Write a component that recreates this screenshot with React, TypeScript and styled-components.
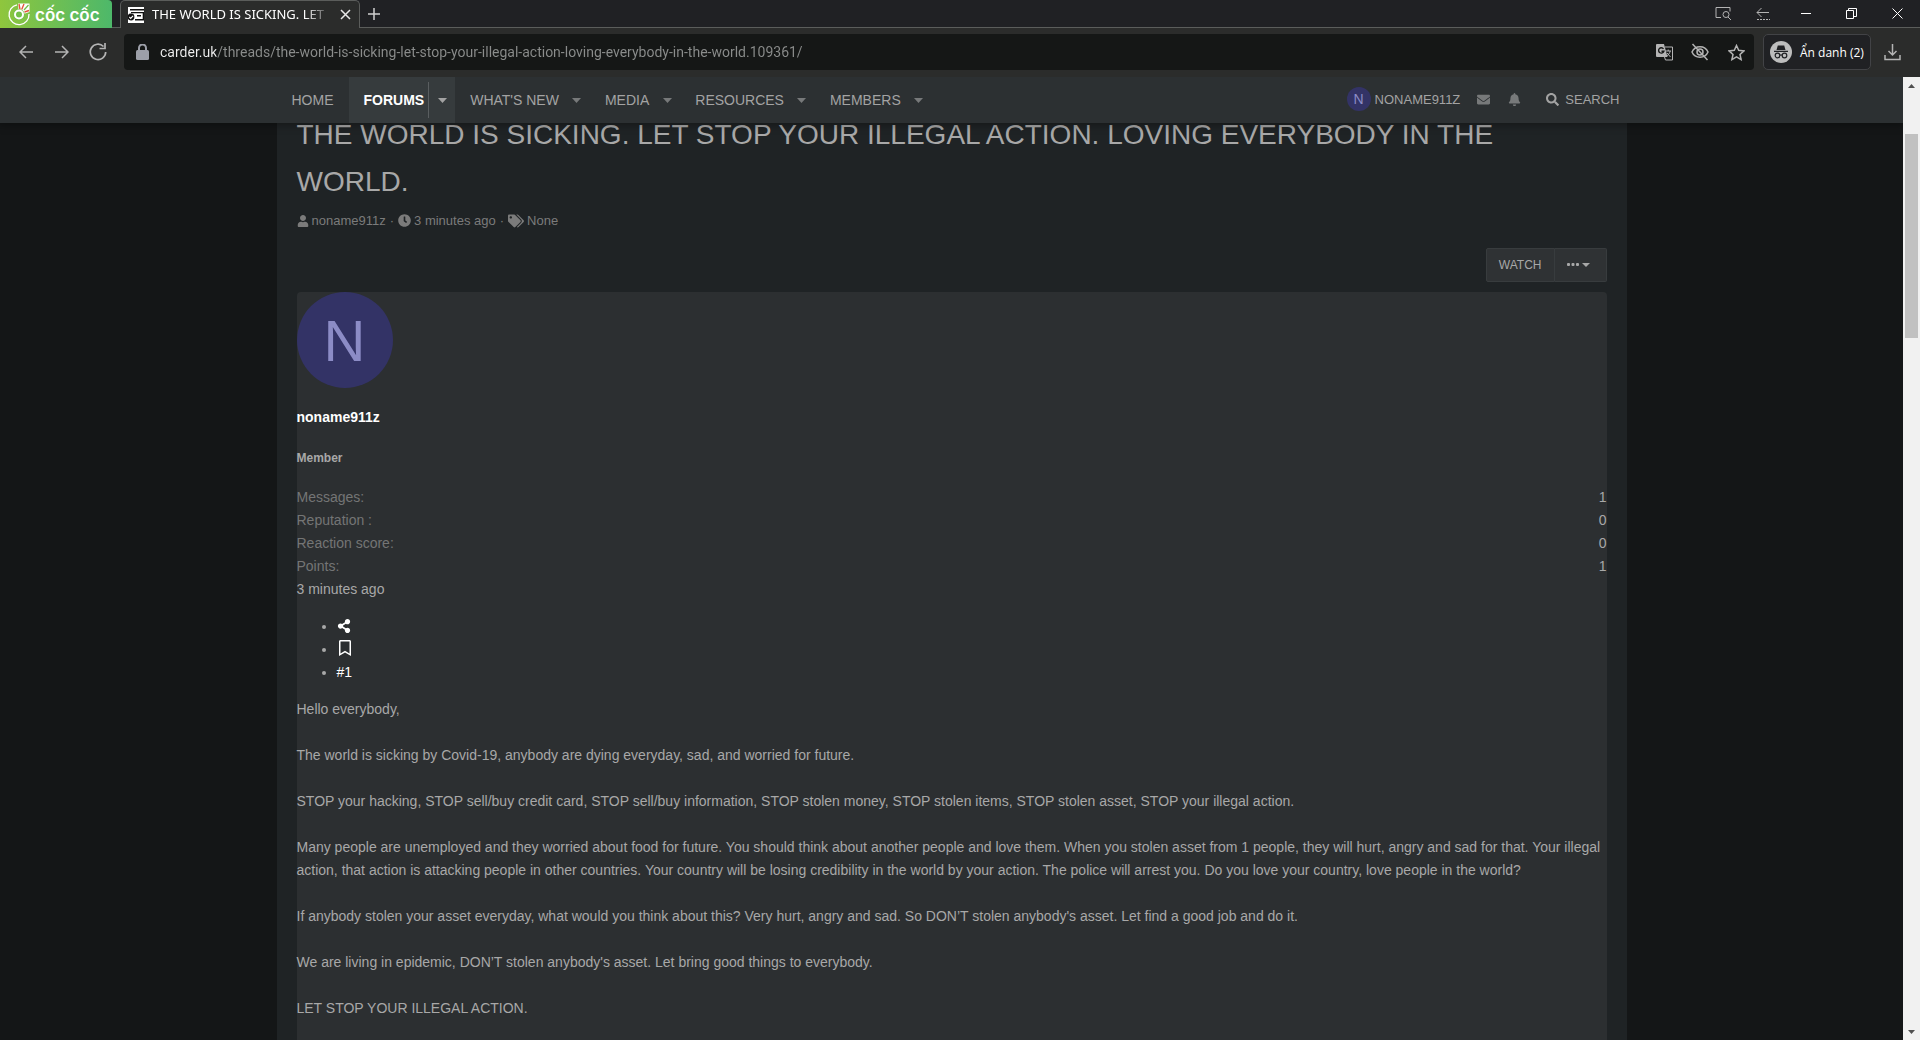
import React from 'react';
import styled, { createGlobalStyle } from 'styled-components';
import {
  FaUser, FaClock, FaTags, FaEnvelope, FaBell, FaSearch, FaShareAlt, FaRegBookmark,
} from 'react-icons/fa';

const Global = createGlobalStyle`
  * { box-sizing: border-box; }
  body { margin: 0; background: #141617; }
  button { border: 0; padding: 0; background: none; color: inherit; font: inherit; cursor: pointer; }
  a { color: inherit; text-decoration: none; }
  svg { display: block; flex: none; }
`;

const uiFont = '"Noto Sans", "Open Sans", sans-serif';
const pageFont = '"Liberation Sans", Arial, sans-serif';

const Window = styled.div`
  height: 100vh;
  display: flex;
  flex-direction: column;
  overflow: hidden;
  font-family: ${pageFont};
`;

/* ---------- Browser frame ---------- */

const TabStrip = styled.div`
  flex: none;
  height: 28px;
  display: flex;
  background: linear-gradient(#5b5d5b, #5b5d5b) bottom / 100% 1px no-repeat #202124;
  font-family: ${uiFont};
`;

const Brand = styled.button`
  width: 112px;
  height: 28px;
  display: flex;
  align-items: center;
  gap: 4px;
  padding-left: 7px;
  border-radius: 0 4px 0 0;
  background: linear-gradient(90deg, #8fc63d, #4db86a);
  color: #fff;
`;

const BrandName = styled.span`
  padding-top: 2px;
  font: 600 17px/26px "Inter", sans-serif;
  white-space: nowrap;
`;

const Tab = styled.div`
  width: 240px;
  height: 28px;
  margin-left: 8px;
  padding: 0 8px 0 7px;
  display: flex;
  align-items: center;
  border: 1px solid #5b5d5b;
  border-bottom: 0;
  border-radius: 5px 5px 0 0;
  background: #2b2c2b;
`;

const TabTitle = styled.span`
  flex: 1;
  margin: 0 8px;
  overflow: hidden;
  white-space: nowrap;
  font-size: 13px;
  line-height: 24px;
  padding-bottom: 2px;
  color: #fff;
  mask-image: linear-gradient(90deg, #000 85%, transparent);
`;

const IconButton = styled.button<{ $w: number; $color?: string }>`
  width: ${(p) => p.$w}px;
  flex: none;
  display: flex;
  align-items: center;
  justify-content: center;
  color: ${(p) => p.$color ?? '#b4b4b4'};
`;

const WindowControls = styled.div`
  margin-left: auto;
  display: flex;
  height: 27px;
`;

const Toolbar = styled.div`
  flex: none;
  height: 49px;
  padding: 6px 10px 7px 8px;
  display: flex;
  background: #2b2c2b;
  font-family: ${uiFont};
`;

const NavButtons = styled.div`
  display: flex;
  width: 116px;
`;

const AddressBar = styled.div`
  flex: 1;
  display: flex;
  align-items: center;
  padding: 0 0 0 12px;
  border-radius: 4px;
  background: #151716;
  color: #9c9fa8;
`;

const AddressInput = styled.input`
  flex: 1;
  min-width: 0;
  height: 36px;
  margin: 0 0 0 11px;
  padding: 0;
  border: 0;
  outline: 0;
  font-family: Roboto, ${uiFont};
  font-size: 14px;
  color: #8b8d8c;
  background: linear-gradient(90deg, #f0f0f0 56px, #8b8d8c 56px);
  background-clip: text;
  -webkit-text-fill-color: transparent;
`;

const AddressActions = styled.div`
  display: flex;
  height: 36px;
`;

const Profile = styled.button`
  width: 108px;
  margin: 0 4px 0 9px;
  padding: 0 6px;
  display: flex;
  align-items: center;
  gap: 8px;
  border: 1px solid #424346;
  border-radius: 5px;
  background: #202124;
  color: #fff;
  font-family: "Open Sans", sans-serif;
  font-size: 12px;
  white-space: nowrap;
`;

/* ---------- Page ---------- */

const Viewport = styled.div`
  flex: 1;
  min-height: 0;
  display: flex;
`;

const Page = styled.div`
  flex: 1;
  min-width: 0;
  overflow: hidden;
  background: #141617;
  color: #a8a8a8;
  font-size: 14px;
  line-height: 23px;
`;

const NavBar = styled.nav`
  position: relative;
  z-index: 1;
  height: 46px;
  background: #2c3032;
  box-shadow: 0 0 8px 2px rgba(0, 0, 0, 0.35);
`;

const NavInner = styled.div`
  height: 100%;
  max-width: 1350px;
  margin: 0 auto;
  display: flex;
  justify-content: space-between;
`;

const NavList = styled.ul`
  margin: 0;
  padding: 0;
  display: flex;
  list-style: none;
`;

const NavItem = styled.li<{ $active?: boolean }>`
  display: flex;
  align-items: center;
  background: ${(p) => (p.$active ? '#363b3d' : 'transparent')};
  color: ${(p) => (p.$active ? '#fff' : '#a3a3a3')};
  font-weight: ${(p) => (p.$active ? 700 : 400)};
`;

const NavLink = styled.a<{ $alone?: boolean }>`
  padding: 0 ${(p) => (p.$alone ? 15 : 4)}px 0 15px;
  line-height: 46px;
  text-transform: uppercase;
`;

const NavCaret = styled.button<{ $active?: boolean }>`
  width: 27px;
  height: 36px;
  display: flex;
  align-items: center;
  justify-content: center;
  border-left: 1px solid ${(p) => (p.$active ? '#5a5e60' : 'transparent')};
  color: ${(p) => (p.$active ? '#a3a3a3' : '#77797a')};
`;

const Account = styled.div`
  display: flex;
  align-items: center;
  padding: 0 7px 2px 0;
  font-size: 13px;
  color: #a3a3a3;
`;

const AccountLink = styled.a<{ $gap: number }>`
  display: flex;
  align-items: center;
  gap: ${(p) => p.$gap}px;
`;

const AccountIcons = styled.div`
  display: flex;
  gap: 18px;
  margin: 0 25px 0 16px;
  color: #77797a;
`;

const Avatar = styled.span<{ $size: number; $font: number }>`
  width: ${(p) => p.$size}px;
  height: ${(p) => p.$size}px;
  display: flex;
  align-items: center;
  justify-content: center;
  border-radius: 50%;
  background: #333366;
  color: #8c8cc6;
  font-size: ${(p) => p.$font}px;
  font-weight: 400;
`;

const Content = styled.main`
  max-width: 1350px;
  min-height: 100%;
  margin: 0 auto;
  padding: 0 20px;
  background: #1f2325;
`;

const Title = styled.h1`
  margin: -12px 0 0;
  font-size: 28px;
  font-weight: 400;
  line-height: 47px;
`;

const Meta = styled.div`
  display: flex;
  align-items: center;
  gap: 4px;
  margin: 5px 0 17px;
  font-size: 13px;
  line-height: 21px;
  color: #7b7b7b;
`;

const MetaItem = styled.a`
  display: flex;
  align-items: center;
  gap: 3px;
`;

const Actions = styled.div`
  display: flex;
  justify-content: flex-end;
  margin-bottom: 10px;
`;

const ActionButton = styled.button<{ $side: 'left' | 'right' }>`
  height: 34px;
  display: flex;
  align-items: center;
  gap: 3px;
  padding: ${(p) => (p.$side === 'left' ? '0 12px' : '0 16px 0 12px')};
  border: 1px solid #383c3e;
  border-left-width: ${(p) => (p.$side === 'left' ? 1 : 0)}px;
  border-radius: ${(p) => (p.$side === 'left' ? '2px 0 0 2px' : '0 2px 2px 0')};
  background: #2f3234;
  font-size: 12px;
  text-transform: uppercase;
`;

const Post = styled.article`
  min-height: 800px;
  border-radius: 4px;
  background: #2c2f31;
`;

const UserName = styled.h4`
  margin: 18px 0 19px;
  font-size: 14px;
  line-height: 23px;
  color: #fff;
`;

const UserTitle = styled.h5`
  margin: 0 0 18px;
  font-size: 12px;
  line-height: 20px;
`;

const Stats = styled.dl`
  margin: 0;
`;

const Stat = styled.div`
  display: flex;
  justify-content: space-between;
  dt { color: #747575; }
  dd { margin: 0; }
`;

const PostTools = styled.ul`
  margin: 14px 0;
  padding-left: 40px;
  a {
    display: inline-block;
    color: #fff;
  }
  svg { display: inline-block; vertical-align: -2px; }
`;

const Body = styled.div`
  p { margin: 0 0 23px; }
`;

const ScrollBar = styled.div`
  flex: none;
  width: 17px;
  display: flex;
  flex-direction: column;
  align-items: center;
  background: #f1f1f1;
  color: #505050;
`;

const ScrollArrow = styled.button`
  width: 17px;
  height: 17px;
  flex: none;
  display: flex;
  align-items: center;
  justify-content: center;
`;

const ScrollTrack = styled.div`
  flex: 1;
  width: 13px;
  padding-top: 40px;
`;

const ScrollThumb = styled.div`
  height: 23%;
  background: #c1c1c1;
`;

/* ---------- Drawings ---------- */

const Caret = ({ w = 9, h = 5, up = false }: { w?: number; h?: number; up?: boolean }) => (
  <svg width={w} height={h} viewBox="0 0 10 6" preserveAspectRatio="none" fill="currentColor" aria-hidden>
    <path d={up ? 'M0 6h10L5 0z' : 'M0 0h10L5 6z'} />
  </svg>
);

type LineProps = { w: number; h: number; sw?: number; children: React.ReactNode };
const Line = ({ w, h, sw = 1.5, children }: LineProps) => (
  <svg width={w} height={h} viewBox={`0 0 ${w} ${h}`} fill="none" stroke="currentColor" strokeWidth={sw} aria-hidden>
    {children}
  </svg>
);

const BrandMark = () => (
  <svg width="24" height="24" viewBox="0 0 24 24" fill="none" aria-hidden>
    <path d="M10 2.800A10 10 0 1 0 22 12" stroke="#fff" strokeWidth="1.300" />
    <path d="M11 1.500h11.500V10l-6 2-5-4z" fill="#fff" />
    <path d="M12 2l1 5.500M17 2l-2.300 5.500M22 8.500l-4.500 1.500" stroke="#e4543c" strokeWidth="1.400" />
    <path d="M21.500 3l-4.500 5" stroke="#6fbf48" strokeWidth="1.200" />
    <circle cx="12" cy="12.500" r="5.600" fill="#74c04a" />
    <circle cx="12" cy="12.500" r="4" stroke="#fff" strokeWidth="2" />
  </svg>
);

const SiteIcon = () => (
  <svg width="16" height="16" viewBox="0 0 16 16" aria-hidden>
    <path fill="#fff" d="M0 0h16v16H0z" />
    <path fill="#111" d="M2 2h14v1.500H2zM3 5h13v1.300H3zM14.700 5H16v8h-1.300zM7 12h9v1.500H7zM9 8h4v1.600H9z" />
    <circle cx="3" cy="10" r="3.400" fill="#111" />
    <path fill="none" stroke="#fff" strokeWidth="1.100" d="M1.300 10l1.400 1.400L5 8.800" />
  </svg>
);

const Incognito = () => (
  <svg width="22" height="22" viewBox="0 0 22 22" aria-hidden>
    <circle cx="11" cy="11" r="11" fill="#bdbdbd" />
    <path fill="#202124" d="M7.800 4.500h6.400l1.300 4.500h-9zM4 9.800h14v1.200H4z" />
    <g fill="none" stroke="#202124" strokeWidth="1.200">
      <circle cx="7.500" cy="14.500" r="2.300" />
      <circle cx="14.500" cy="14.500" r="2.300" />
      <path d="M9.800 14.300q1.200-.8 2.400 0" />
    </g>
  </svg>
);

const Translate = () => (
  <svg width="17" height="17" viewBox="0 0 17 17" aria-hidden>
    <path fill="currentColor" d="M1 0h7l3.500 13H1a1 1 0 0 1-1-1V1a1 1 0 0 1 1-1z" />
    <path fill="none" stroke="currentColor" d="M9 3h7.500v13H9.500L8.500 13M9.500 7h5.500M12.200 5.500V7M14.200 7c-.5 2.500-2 4-3.700 5.500M11 9l3.500 4" />
    <path fill="none" stroke="#151716" strokeWidth="1.400" d="M7.500 4.800A2.700 2.700 0 1 0 7.900 7.200H5.500" />
  </svg>
);

/* ---------- Data ---------- */

const menu = [
  { label: 'Home', alone: true },
  { label: 'Forums', active: true },
  { label: "What's new" },
  { label: 'Media' },
  { label: 'Resources' },
  { label: 'Members' },
];

const stats = [
  ['Messages:', '1'],
  ['Reputation :', '0'],
  ['Reaction score:', '0'],
  ['Points:', '1'],
];

const paragraphs = [
  'Hello everybody,',
  'The world is sicking by Covid-19, anybody are dying everyday, sad, and worried for future.',
  'STOP your hacking, STOP sell/buy credit card, STOP sell/buy information, STOP stolen money, STOP stolen items, STOP stolen asset, STOP your illegal action.',
  'Many people are unemployed and they worried about food for future. You should think about another people and love them. When you stolen asset from 1 people, they will hurt, angry and sad for that. Your illegal action, that action is attacking people in other countries. Your country will be losing credibility in the world by your action. The police will arrest you. Do you love your country, love people in the world?',
  "If anybody stolen your asset everyday, what would you think about this? Very hurt, angry and sad. So DON’T stolen anybody's asset. Let find a good job and do it.",
  "We are living in epidemic, DON’T stolen anybody's asset. Let bring good things to everybody.",
  'LET STOP YOUR ILLEGAL ACTION.',
];

export default function App() {
  return (
    <Window>
      <Global />
      <TabStrip>
        <Brand aria-label="Cốc Cốc menu">
          <BrandMark />
          <BrandName>cốc cốc</BrandName>
        </Brand>
        <Tab>
          <SiteIcon />
          <TabTitle>THE WORLD IS SICKING. LET</TabTitle>
          <IconButton $w={11} $color="#e8e8e8" aria-label="Close tab">
            <Line w={11} h={11}><path d="M1 1l9 9M10 1l-9 9" /></Line>
          </IconButton>
        </Tab>
        <IconButton $w={28} $color="#d0d0d0" aria-label="New tab">
          <Line w={12} h={12}><path d="M6 0v12M0 6h12" /></Line>
        </IconButton>
        <WindowControls>
          <IconButton $w={38} aria-label="Search tabs">
            <Line w={17} h={13} sw={1}><path d="M6 10.500H1V.5h14v4" /><circle cx="11" cy="7.500" r="3" /><path d="M13 10l3 3" /></Line>
          </IconButton>
          <IconButton $w={42} aria-label="Reopen tab">
            <Line w={14} h={13} sw={1}><path d="M13 5.500H1M5.500 1L1 5.500 5.500 10" /><path d="M1 12.500h13" strokeDasharray="2 1" /></Line>
          </IconButton>
          <IconButton $w={43} $color="#fff" aria-label="Minimize">
            <Line w={10} h={11} sw={1}><path d="M0 5.500h10" /></Line>
          </IconButton>
          <IconButton $w={48} $color="#fff" aria-label="Restore">
            <Line w={11} h={11} sw={1}><path d="M.5 2.500h7v8h-7zM2.500 2.500v-2h8v8h-3" /></Line>
          </IconButton>
          <IconButton $w={45} $color="#fff" aria-label="Close window">
            <Line w={11} h={11} sw={1}><path d="M.5.5l10 10M10.500.5l-10 10" /></Line>
          </IconButton>
        </WindowControls>
      </TabStrip>

      <Toolbar>
        <NavButtons>
          <IconButton $w={36} aria-label="Back">
            <Line w={14} h={14}><path d="M14 7H1M7 1L1 7l6 6" /></Line>
          </IconButton>
          <IconButton $w={36} aria-label="Forward">
            <Line w={14} h={14}><path d="M0 7h13M7 1l6 6-6 6" /></Line>
          </IconButton>
          <IconButton $w={36} aria-label="Reload">
            <Line w={18} h={18} sw={1.7}><path d="M14.500 3.500A7.700 7.700 0 1 0 16.700 9" /><path d="M16 0v5.500h-5.500" /></Line>
          </IconButton>
        </NavButtons>
        <AddressBar>
          <svg width="13" height="16" viewBox="0 0 13 16" fill="currentColor" aria-hidden>
            <rect y="6" width="13" height="10" rx="1.500" />
            <path d="M3 7V4a3.500 3.500 0 0 1 7 0v3" fill="none" stroke="currentColor" strokeWidth="2" />
          </svg>
          <AddressInput
            aria-label="Address"
            defaultValue="carder.uk/threads/the-world-is-sicking-let-stop-your-illegal-action-loving-everybody-in-the-world.109361/"
          />
          <AddressActions>
            <IconButton $w={36} aria-label="Translate"><Translate /></IconButton>
            <IconButton $w={36} aria-label="Tracking protection">
              <Line w={18} h={18}><path d="M1 9c3-7 13-7 16 0-3 7-13 7-16 0z" /><circle cx="9" cy="9" r="3" /><path d="M1.500 1l15 16" /></Line>
            </IconButton>
            <IconButton $w={36} aria-label="Bookmark">
              <Line w={17} h={17}><path d="M8.500 1.500l2.200 4.800 5.200.6-3.900 3.500 1.100 5.200-4.600-2.700-4.600 2.700 1.100-5.200L1.100 6.900l5.200-.6z" /></Line>
            </IconButton>
          </AddressActions>
        </AddressBar>
        <Profile>
          <Incognito />
          Ẩn danh (2)
        </Profile>
        <IconButton $w={35} aria-label="Downloads">
          <Line w={17} h={17}><path d="M8.500 0v11M4.500 7l4 4 4-4M1 11v4.500h15V11" /></Line>
        </IconButton>
      </Toolbar>

      <Viewport>
        <Page>
          <NavBar>
            <NavInner>
              <NavList>
                {menu.map((m) => (
                  <NavItem key={m.label} $active={m.active}>
                    <NavLink href="#" $alone={m.alone}>{m.label}</NavLink>
                    {!m.alone && (
                      <NavCaret $active={m.active} aria-label={`Toggle ${m.label}`}><Caret /></NavCaret>
                    )}
                  </NavItem>
                ))}
              </NavList>
              <Account>
                <AccountLink href="#" $gap={4}>
                  <Avatar $size={24} $font={14}>N</Avatar>
                  NONAME911Z
                </AccountLink>
                <AccountIcons>
                  <IconButton $w={14} $color="#77797a" aria-label="Inbox"><FaEnvelope size={13} /></IconButton>
                  <IconButton $w={13} $color="#77797a" aria-label="Alerts"><FaBell size={13} /></IconButton>
                </AccountIcons>
                <AccountLink href="#" $gap={6}>
                  <FaSearch size={13} />
                  SEARCH
                </AccountLink>
              </Account>
            </NavInner>
          </NavBar>

          <Content>
            <Title>THE WORLD IS SICKING. LET STOP YOUR ILLEGAL ACTION. LOVING EVERYBODY IN THE WORLD.</Title>
            <Meta>
              <MetaItem href="#"><FaUser size={12} />noname911z</MetaItem>
              ·
              <MetaItem href="#"><FaClock size={13} />3 minutes ago</MetaItem>
              ·
              <MetaItem as="span"><FaTags size={16} />None</MetaItem>
            </Meta>
            <Actions>
              <ActionButton $side="left">Watch</ActionButton>
              <ActionButton $side="right" aria-label="More options">
                <svg width="12" height="4" viewBox="0 0 12 4" fill="currentColor" aria-hidden>
                  <rect y="0" width="3" height="3" rx="1" />
                  <rect x="4.500" width="3" height="3" rx="1" />
                  <rect x="9" width="3" height="3" rx="1" />
                </svg>
                <Caret w={8} h={4} />
              </ActionButton>
            </Actions>
            <Post>
              <Avatar $size={96} $font={58}>N</Avatar>
              <UserName><a href="#">noname911z</a></UserName>
              <UserTitle>Member</UserTitle>
              <Stats>
                {stats.map(([k, v]) => (
                  <Stat key={k}><dt>{k}</dt><dd>{v}</dd></Stat>
                ))}
              </Stats>
              <a href="#">3 minutes ago</a>
              <PostTools>
                <li><a href="#" aria-label="Share"><FaShareAlt size={14} /></a></li>
                <li><a href="#" aria-label="Bookmark"><FaRegBookmark size={16} /></a></li>
                <li><a href="#">#1</a></li>
              </PostTools>
              <Body>
                {paragraphs.map((p) => <p key={p}>{p}</p>)}
              </Body>
            </Post>
          </Content>
        </Page>
        <ScrollBar>
          <ScrollArrow aria-label="Scroll up"><Caret w={7} h={4} up /></ScrollArrow>
          <ScrollTrack><ScrollThumb /></ScrollTrack>
          <ScrollArrow aria-label="Scroll down"><Caret w={7} h={4} /></ScrollArrow>
        </ScrollBar>
      </Viewport>
    </Window>
  );
}
